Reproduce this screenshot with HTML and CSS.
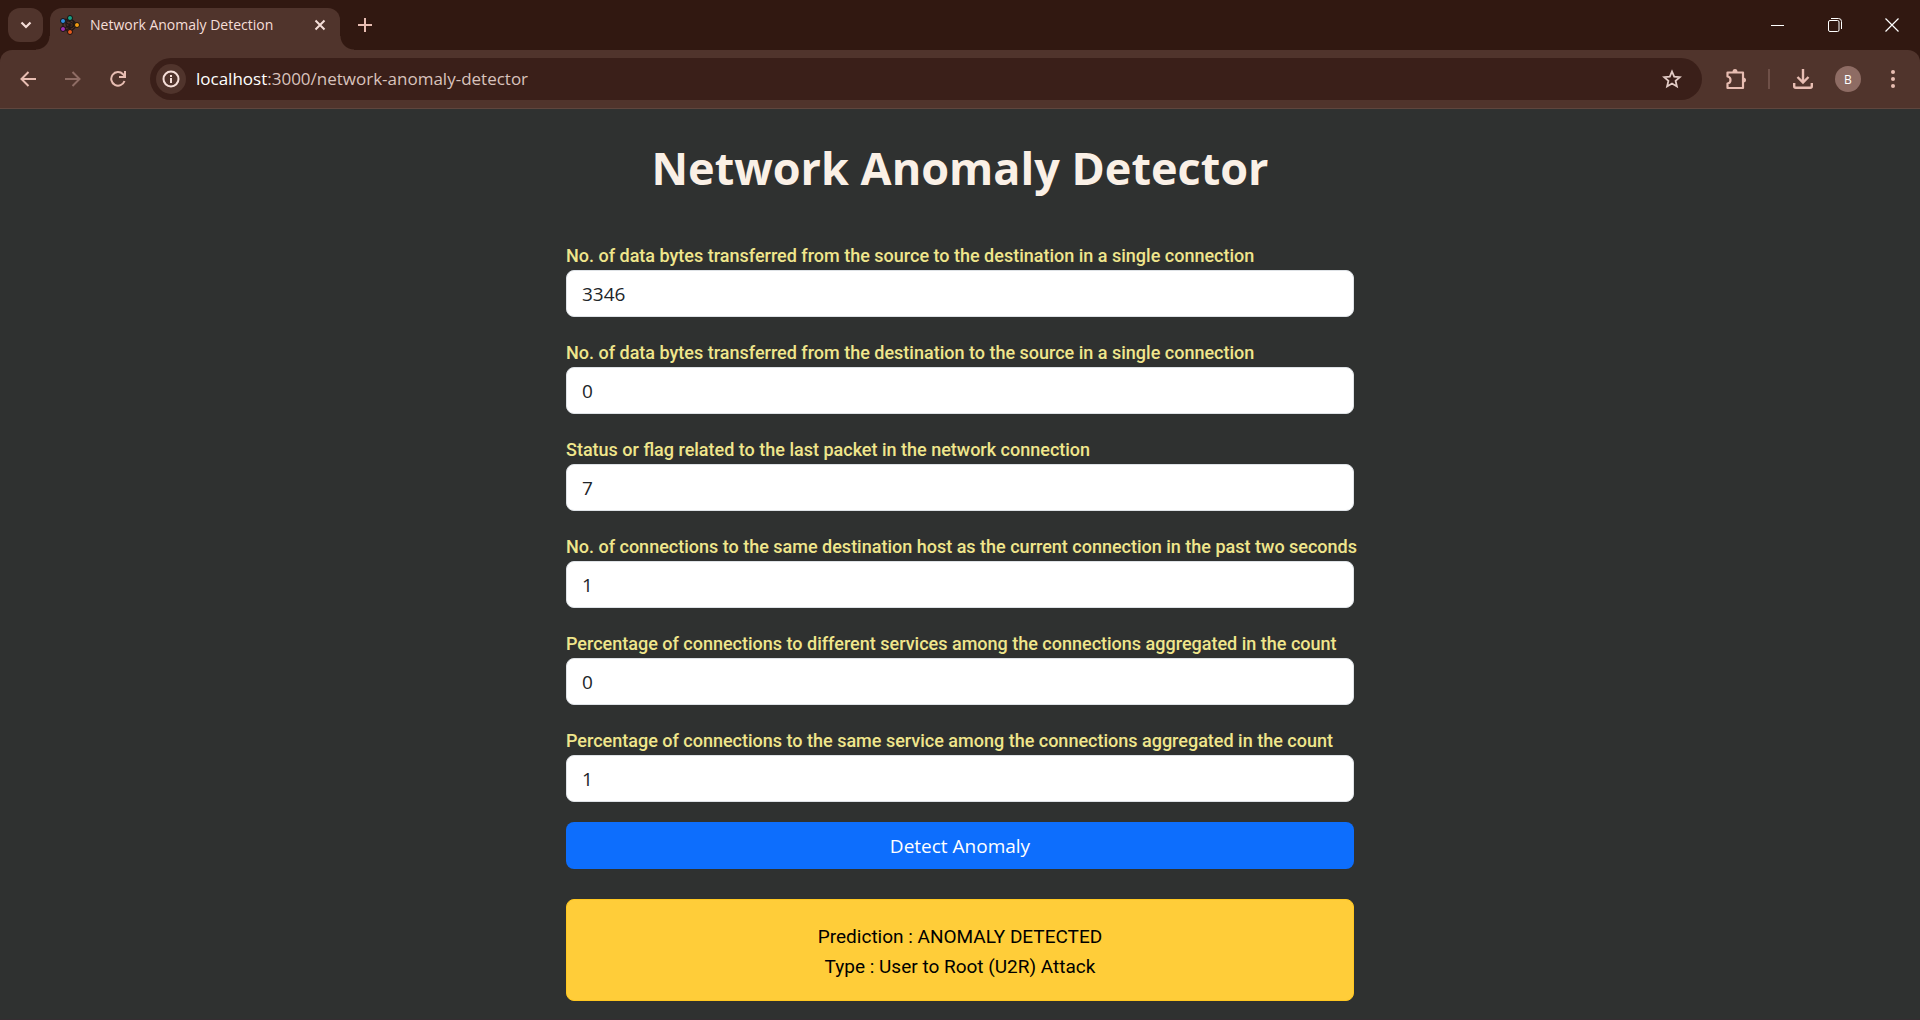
FILE: index.html
```html
<!DOCTYPE html>
<html lang="en">
<head>
<meta charset="utf-8">
<title>Network Anomaly Detection</title>
<link rel="stylesheet" href="styles.css">
</head>
<body>
<header class="browser">
  <div class="tab-strip">
    <button class="tab-search" type="button" aria-label="Search tabs">
      <svg width="14" height="14" viewBox="0 0 14 14"><path d="M2.500 4.500L7 9l4.500-4.500" fill="none" stroke="currentColor" stroke-width="2.200"/></svg>
    </button>
    <div class="tab">
      <svg class="favicon" width="20" height="20" viewBox="0 0 20 20">
        <g stroke="#201715" stroke-width="1.200" fill="none">
          <path d="M3 6l7-3 8 7-8 7-7-3zM10 3v14M3 6l7 4-7 4M10 10h8M5 4l11 6M6 15l10-5"/>
          <circle cx="10" cy="9" r="4"/>
        </g>
        <g stroke="#171210" stroke-width="1">
          <circle cx="10" cy="3" r="2.500" fill="#16a085"/>
          <circle cx="3" cy="6" r="2.500" fill="#2f8fe0"/>
          <circle cx="3" cy="14" r="2.500" fill="#a030b0"/>
          <circle cx="10" cy="17" r="2.500" fill="#e8591c"/>
          <circle cx="17" cy="10" r="2.500" fill="#f39c12"/>
        </g>
      </svg>
      <span class="tab-title">Network Anomaly Detection</span>
      <button class="tab-close" type="button" aria-label="Close tab">
        <svg width="12" height="12" viewBox="0 0 12 12"><path d="M1.500 1.500l9 9M10.500 1.500l-9 9" stroke="currentColor" stroke-width="2"/></svg>
      </button>
    </div>
    <button class="new-tab" type="button" aria-label="New tab">
      <svg width="14" height="14" viewBox="0 0 14 14"><path d="M7 0v14M0 7h14" stroke="currentColor" stroke-width="2"/></svg>
    </button>
    <div class="window-controls">
      <button type="button" aria-label="Minimize"><svg width="14" height="14" viewBox="0 0 14 14"><path d="M0 7.500h13" stroke="currentColor"/></svg></button>
      <button type="button" aria-label="Restore"><svg width="14" height="14" viewBox="0 0 14 14" fill="none" stroke="currentColor"><rect x=".5" y="2.500" width="10.500" height="11" rx="1.500"/><path d="M3 .5h7.500a3 3 0 0 1 3 3V11"/></svg></button>
      <button type="button" aria-label="Close"><svg width="14" height="14" viewBox="0 0 14 14"><path d="M.5.5l13 13M13.500.5l-13 13" stroke="currentColor" stroke-width="1.200"/></svg></button>
    </div>
  </div>
  <div class="toolbar">
    <button class="tool" type="button" aria-label="Back"><svg width="16" height="16" viewBox="0 0 16 16" fill="none" stroke="currentColor" stroke-width="2"><path d="M16 8H2M8.500 1l-7 7 7 7"/></svg></button>
    <button class="tool tool-off" type="button" aria-label="Forward" disabled><svg width="16" height="16" viewBox="0 0 16 16" fill="none" stroke="currentColor" stroke-width="2"><path d="M0 8h14M7.500 1l7 7-7 7"/></svg></button>
    <button class="tool" type="button" aria-label="Reload"><svg width="16" height="16" viewBox="0 0 16 16" fill="none" stroke="currentColor" stroke-width="2"><path d="M14.500 10A6.800 6.800 0 1 1 13 3.200L15 5.500M15 0v6H9"/></svg></button>
    <div class="omnibox">
      <button class="site-info" type="button" aria-label="Site information"><svg width="18" height="18" viewBox="0 0 18 18" fill="none" stroke="currentColor" stroke-width="2"><circle cx="9" cy="9" r="7.500"/><path d="M9 8v5M9 5v2"/></svg></button>
      <a class="url" href="#"><span class="host">localhost</span>:3000/network-anomaly-detector</a>
      <button class="bookmark" type="button" aria-label="Bookmark this tab"><svg width="20" height="20" viewBox="0 0 20 20" fill="none" stroke="currentColor" stroke-width="1.800"><path d="M10 2.500l2.200 5.200 5.600.5-4.200 3.700 1.300 5.500L10 14.500l-4.900 2.900 1.300-5.500L2.200 8.200l5.600-.5z"/></svg></button>
    </div>
    <div class="actions">
      <button class="action" type="button" aria-label="Extensions"><svg width="22" height="22" viewBox="0 0 22 22"><path d="M2.500 8.500V4.500h15.500V20H2.500v-4.500c4-.5 4-6.500 0-7z" fill="none" stroke="currentColor" stroke-width="2.200" stroke-linejoin="round"/><path d="M7.500 4a2.500 3 0 0 1 5 0zM18 9.500a3 2.500 0 0 1 0 5z" fill="currentColor"/></svg></button>
      <span class="divider"></span>
      <button class="action" type="button" aria-label="Downloads"><svg width="20" height="20" viewBox="0 0 20 20" fill="none" stroke="currentColor" stroke-width="2.400"><path d="M10 0v13M4.500 8l5.500 5.500L15.500 8M1.200 14v3.300q0 1.500 1.500 1.500h14.600q1.500 0 1.500-1.500V14"/></svg></button>
      <button class="profile" type="button">B</button>
      <button class="action" type="button" aria-label="Menu"><svg width="6" height="18" viewBox="0 0 6 18" fill="currentColor"><circle cx="3" cy="2" r="2"/><circle cx="3" cy="9" r="2"/><circle cx="3" cy="16" r="2"/></svg></button>
    </div>
  </div>
</header>
<main class="page">
  <h1>Network Anomaly Detector</h1>
  <form class="detector">
    <div class="field"><label for="src">No. of data bytes transferred from the source to the destination in a single connection</label><input id="src" type="text" value="3346"></div>
    <div class="field"><label for="dst">No. of data bytes transferred from the destination to the source in a single connection</label><input id="dst" type="text" value="0"></div>
    <div class="field"><label for="flag">Status or flag related to the last packet in the network connection</label><input id="flag" type="text" value="7"></div>
    <div class="field"><label for="count">No. of connections to the same destination host as the current connection in the past two seconds</label><input id="count" type="text" value="1"></div>
    <div class="field"><label for="diff">Percentage of connections to different services among the connections aggregated in the count</label><input id="diff" type="text" value="0"></div>
    <div class="field"><label for="same">Percentage of connections to the same service among the connections aggregated in the count</label><input id="same" type="text" value="1"></div>
    <button class="submit" type="button">Detect Anomaly</button>
    <div class="alert" role="alert">
      <p>Prediction : ANOMALY DETECTED</p>
      <p>Type : User to Root (U2R) Attack</p>
    </div>
  </form>
</main>
</body>
</html>
```
FILE: styles.css
```css
* { box-sizing: border-box; }

body {
  margin: 0;
  min-height: 100vh;
  display: flex;
  flex-direction: column;
  background: #2f3130;
  font-family: "Open Sans", "Noto Sans", sans-serif;
}

button {
  display: flex;
  align-items: center;
  justify-content: center;
  padding: 0;
  border: 0;
  background: none;
  color: inherit;
  font-family: inherit;
}

svg { display: block; flex: none; }

/* Browser frame */
.browser {
  background: #311811;
  color: #e8bdb2;
}

.tab-strip {
  display: flex;
  height: 50px;
  padding: 8px 0 0 8px;
}

.tab-search {
  width: 35px;
  height: 34px;
  border-radius: 12px;
  background: #50342c;
  color: #f5ded8;
}

.tab {
  position: relative;
  display: flex;
  align-items: center;
  width: 290px;
  height: 42px;
  margin-left: 7px;
  padding: 0 10px 8px;
  border-radius: 12px 12px 0 0;
  background: #50342c;
  color: #f5ded8;
}

.tab::before,
.tab::after {
  content: "";
  position: absolute;
  bottom: 0;
  width: 14px;
  height: 14px;
}

.tab::before {
  right: 100%;
  background: radial-gradient(circle at 0 0, transparent 13px, #50342c 14px);
}

.tab::after {
  left: 100%;
  background: radial-gradient(circle at 100% 0, transparent 13px, #50342c 14px);
}

.tab-title {
  flex: 1;
  margin-left: 10px;
  font-size: 14px;
  line-height: 20px;
}

.tab-close { width: 20px; height: 20px; }

.new-tab {
  width: 34px;
  height: 34px;
  margin-left: 8px;
}

.window-controls {
  display: flex;
  margin: -8px 0 0 auto;
  color: #fff;
}

.window-controls button { width: 57px; height: 49px; }

.toolbar {
  display: flex;
  align-items: center;
  height: 59px;
  padding: 0 24px 0 5px;
  border-bottom: 1px solid #5f463e;
  border-radius: 12px 12px 0 0;
  background: #50342c;
}

.tool { width: 45px; height: 36px; }
.tool-off { color: #8e6c64; }

.omnibox {
  flex: 1;
  display: flex;
  align-items: center;
  height: 42px;
  margin-left: 10px;
  padding: 0 20px 0 6px;
  border-radius: 21px;
  background: #3a1f19;
}

.site-info {
  width: 30px;
  height: 30px;
  border-radius: 15px;
  background: #50342c;
  color: #f5ded8;
}

.url {
  flex: 1;
  margin-left: 10px;
  color: #d9c3bd;
  font-size: 17px;
  line-height: 24px;
  text-decoration: none;
}

.host { color: #fff; }
.bookmark { color: #e3ccc6; }

.actions {
  display: flex;
  align-items: center;
  margin-left: 23px;
}

.divider {
  width: 2px;
  height: 20px;
  margin: 0 23px 0 21px;
  background: #6f5048;
}

.profile {
  width: 26px;
  height: 26px;
  margin: 0 29px 0 22px;
  border-radius: 13px;
  background: #8e6c64;
  color: #fff;
  font-size: 12px;
}

/* Detector page */
.page {
  flex: 1;
  padding: 29px 16px 17px;
  border-bottom: 1px solid #352d31;
}

h1 {
  margin: 0 0 42px;
  color: #faf0e6;
  font-size: 45px;
  font-weight: 700;
  line-height: 60px;
  text-align: center;
}

.detector {
  display: flex;
  flex-direction: column;
  max-width: 788px;
  margin: 0 auto;
}

.field {
  display: flex;
  flex-direction: column;
  margin-bottom: 20px;
}

.field label {
  padding-top: 2px;
  color: #f0e68c;
  font-family: Roboto, sans-serif;
  font-size: 18px;
  font-weight: 500;
  line-height: 28px;
  white-space: nowrap;
}

.field input {
  width: 100%;
  height: 47px;
  padding: 0 15px;
  border: 1px solid #dee2e6;
  border-radius: 8px;
  background: #fff;
  color: #212529;
  font-family: inherit;
  font-size: 19px;
}

.submit {
  height: 47px;
  border-radius: 8px;
  background: #0d6efd;
  color: #fff;
  font-size: 19px;
}

.alert {
  margin-top: 30px;
  padding: 22px 20px 18px;
  border: 1px solid #ffc720;
  border-radius: 8px;
  background: #ffcd39;
  color: #000;
  font-family: Roboto, sans-serif;
  font-size: 19px;
  line-height: 30px;
  text-align: center;
}

.alert p { margin: 0; }
```
